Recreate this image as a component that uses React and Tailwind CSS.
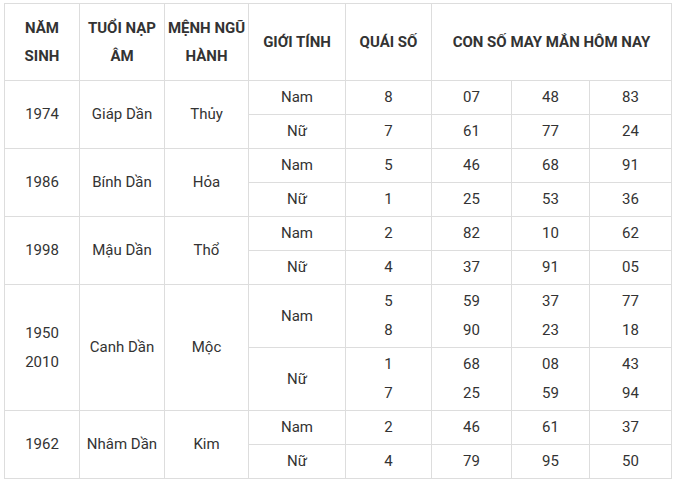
import React from "react";

// lucky numbers table for the Dần years
const rows = [
  {
    years: ["1974"],
    napAm: "Giáp Dần",
    menh: "Thủy",
    tall: false,
    sub: [
      { gender: "Nam", quai: ["8"], nums: [["07"], ["48"], ["83"]] },
      { gender: "Nữ", quai: ["7"], nums: [["61"], ["77"], ["24"]] },
    ],
  },
  {
    years: ["1986"],
    napAm: "Bính Dần",
    menh: "Hỏa",
    tall: false,
    sub: [
      { gender: "Nam", quai: ["5"], nums: [["46"], ["68"], ["91"]] },
      { gender: "Nữ", quai: ["1"], nums: [["25"], ["53"], ["36"]] },
    ],
  },
  {
    years: ["1998"],
    napAm: "Mậu Dần",
    menh: "Thổ",
    tall: false,
    sub: [
      { gender: "Nam", quai: ["2"], nums: [["82"], ["10"], ["62"]] },
      { gender: "Nữ", quai: ["4"], nums: [["37"], ["91"], ["05"]] },
    ],
  },
  {
    years: ["1950", "2010"],
    napAm: "Canh Dần",
    menh: "Mộc",
    tall: true,
    sub: [
      { gender: "Nam", quai: ["5", "8"], nums: [["59", "90"], ["37", "23"], ["77", "18"]] },
      { gender: "Nữ", quai: ["1", "7"], nums: [["68", "25"], ["08", "59"], ["43", "94"]] },
    ],
  },
  {
    years: ["1962"],
    napAm: "Nhâm Dần",
    menh: "Kim",
    tall: false,
    sub: [
      { gender: "Nam", quai: ["2"], nums: [["46"], ["61"], ["37"]] },
      { gender: "Nữ", quai: ["4"], nums: [["79"], ["95"], ["50"]] },
    ],
  },
];

const Cell = ({ children, span = false, className = "" }) => (
  <div
    className={`bg-white flex flex-col items-center justify-center text-center leading-[29px] ${
      span ? "row-span-2" : ""
    } ${className}`}
  >
    {children}
  </div>
);

const Head = ({ children, className = "" }) => (
  <div
    className={`bg-white flex flex-col items-center justify-center text-center font-bold leading-[28px] text-[#333] ${className}`}
  >
    {children}
  </div>
);

export default function App() {
  return (
    <div className="bg-white w-[677px] h-[481px] pl-[4px] pt-[3px]" style={{ fontFamily: "Roboto, 'Noto Sans', sans-serif" }}>
      <div className="grid w-[668px] gap-px p-px bg-[#dddddd] text-[15px] text-[#333] grid-cols-[74px_84px_83px_96px_85px_79px_77px_81px] grid-rows-[76px_33px_33px_33px_33px_33px_33px_62px_62px_33px_33px]">
        <Head>
          <span>NĂM</span>
          <span>SINH</span>
        </Head>
        <Head>
          <span>TUỔI NẠP</span>
          <span>ÂM</span>
        </Head>
        <Head>
          <span>MỆNH NGŨ</span>
          <span>HÀNH</span>
        </Head>
        <Head>GIỚI TÍNH</Head>
        <Head>QUÁI SỐ</Head>
        <Head className="col-span-3">CON SỐ MAY MẮN HÔM NAY</Head>

        {rows.map((r) => (
          <React.Fragment key={r.years.join("-")}>
            <Cell span>
              {r.years.map((y) => (
                <span key={y}>{y}</span>
              ))}
            </Cell>
            <Cell span>{r.napAm}</Cell>
            <Cell span>{r.menh}</Cell>
            {r.sub.map((s, i) => (
              <React.Fragment key={s.gender}>
                <Cell className={i === 0 ? "col-start-4" : "col-start-4"}>{s.gender}</Cell>
                <Cell>
                  {s.quai.map((q) => (
                    <span key={q}>{q}</span>
                  ))}
                </Cell>
                {s.nums.map((n, j) => (
                  <Cell key={j}>
                    {n.map((v) => (
                      <span key={v}>{v}</span>
                    ))}
                  </Cell>
                ))}
              </React.Fragment>
            ))}
          </React.Fragment>
        ))}
      </div>
    </div>
  );
}
